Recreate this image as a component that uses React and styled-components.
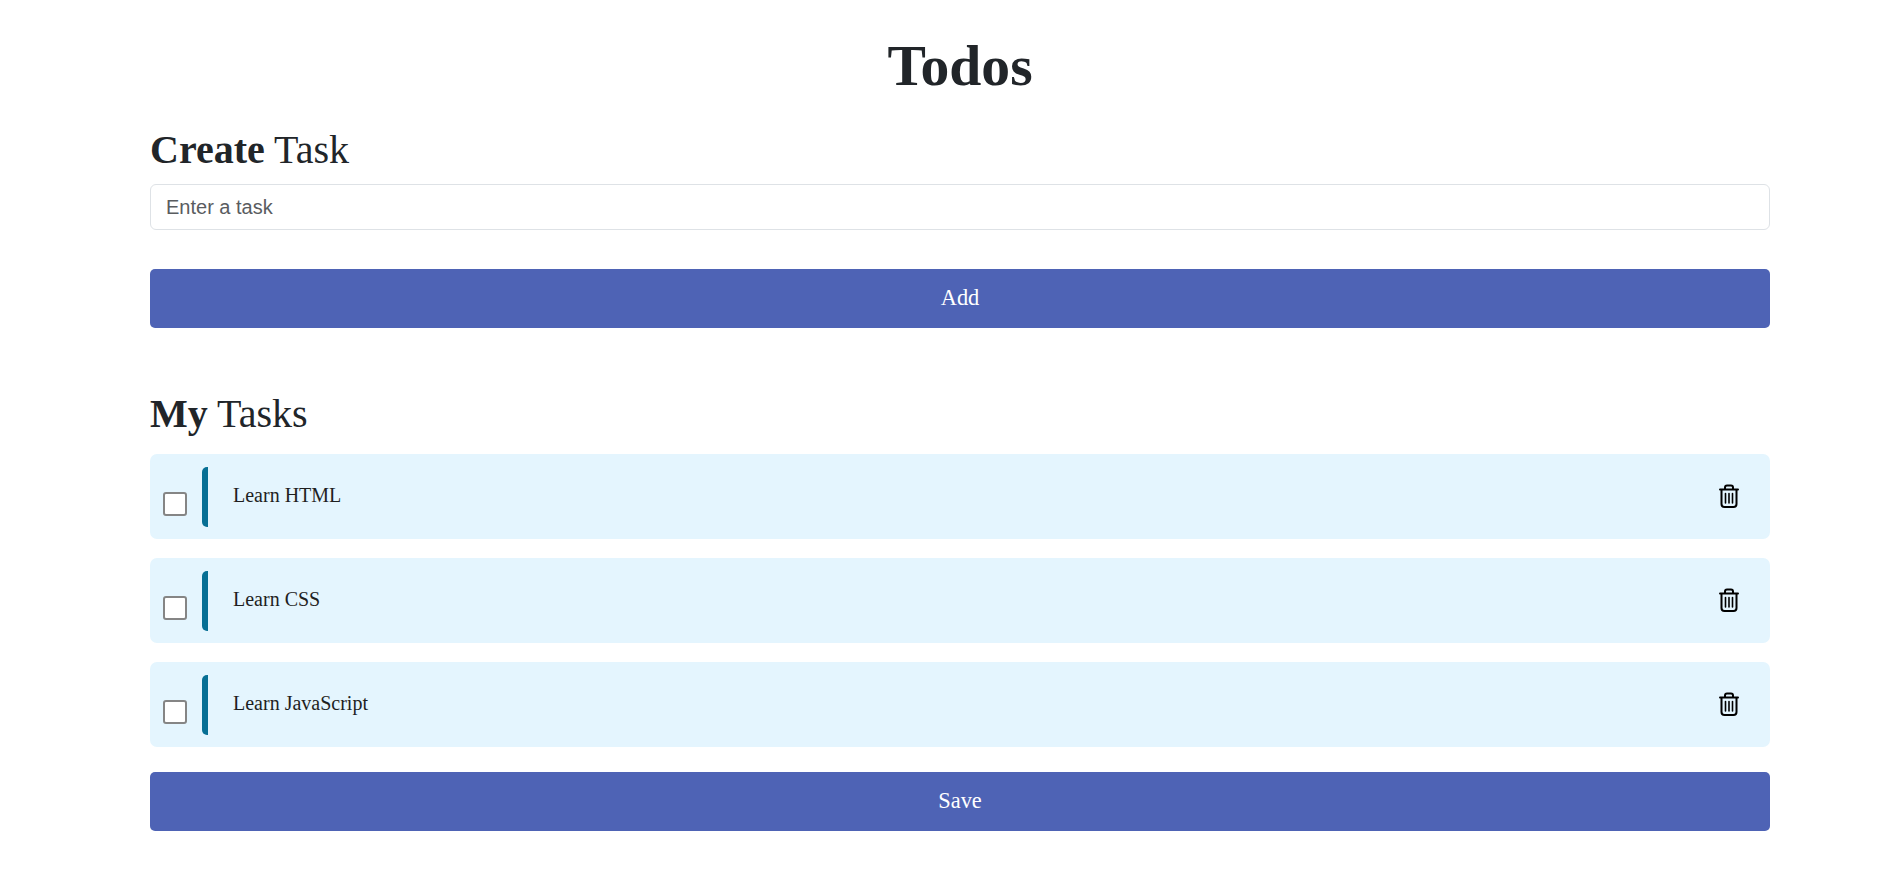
import React from "react";
import styled, { createGlobalStyle } from "styled-components";

const Global = createGlobalStyle`
  * { box-sizing: border-box; }
  html, body { margin: 0; padding: 0; background: #fff; }
  body { font-family: "Liberation Serif", "Times New Roman", serif; color: #212529; }
`;

const Page = styled.main`
  width: 1620px;
  margin: 0 0 0 150px;
  padding: 0 0 60px;
  display: flex;
  flex-direction: column;
`;

const Title = styled.h1`
  margin: 0;
  padding-top: 34px;
  height: 126px;
  line-height: 64px;
  font-size: 57.6px;
  font-weight: 700;
  text-align: center;
`;

const Heading = styled.h2`
  margin: 0;
  font-size: 40px;
  line-height: 48px;
  font-weight: 400;
  b { font-weight: 700; }
`;

const Input = styled.input`
  display: block;
  width: 100%;
  height: 46px;
  margin-top: 10px;
  padding: 0 15px;
  border: 1px solid #dee2e6;
  border-radius: 6px;
  font-family: "Liberation Sans", Arial, sans-serif;
  font-size: 20px;
  color: #212529;
  outline: none;
  &::placeholder { color: #595c5f; opacity: 1; }
`;

const Button = styled.button`
  display: block;
  width: 100%;
  height: 59px;
  margin-top: ${(p) => p.$top}px;
  padding: 0 0 2px;
  border: 0;
  border-radius: 5px;
  background: #4e63b5;
  color: #fff;
  font-family: "Liberation Serif", serif;
  font-size: 22.4px;
`;

const TasksHeading = styled(Heading)`
  margin-top: 62px;
`;

const List = styled.ul`
  list-style: none;
  margin: 16px 0 0;
  padding: 0;
  display: flex;
  flex-direction: column;
  gap: 19px;
`;

const Row = styled.li`
  height: 85px;
  display: flex;
  align-items: flex-start;
  padding: 13px 0 0 13px;
  background: #e4f5fe;
  border-radius: 7px;
`;

const Check = styled.input.attrs({ type: "checkbox" })`
  appearance: none;
  flex: none;
  width: 24px;
  height: 24px;
  margin: 25px 15px 0 0;
  background: #fff;
  border: 2px solid #858585;
  border-radius: 3px;
`;

const Accent = styled.span`
  flex: none;
  width: 6px;
  height: 60px;
  background: #076f94;
  border-radius: 5px 0 0 5px;
`;

const Label = styled.span`
  flex: 1;
  margin: 16px 0 0 25px;
  font-size: 20px;
  line-height: 24px;
  color: #1f1f1f;
`;

const Trash = styled.button`
  flex: none;
  margin: 17px 31px 0 0;
  padding: 0;
  border: 0;
  background: none;
  color: #000;
  display: flex;
`;

const TrashIcon = () => (
  <svg width="20" height="24" viewBox="0 0 20 24" fill="none" stroke="currentColor" strokeWidth="2" strokeLinecap="round">
    <path d="M1 5.5H19" />
    <path d="M6 5V3.5C6 2.4 6.9 1.5 8 1.5H12C13.1 1.5 14 2.4 14 3.5V5" />
    <path d="M2.5 6V20C2.5 21.7 3.8 23 5.5 23H14.5C16.2 23 17.5 21.7 17.5 20V6" />
    <path d="M6.5 9.5V19M10 9.5V19M13.5 9.5V19" strokeWidth="1.6" />
  </svg>
);

const tasks = ["Learn HTML", "Learn CSS", "Learn JavaScript"];

export default function App() {
  return (
    <Page>
      <Global />
      <Title>Todos</Title>
      <Heading><b>Create</b> Task</Heading>
      <Input placeholder="Enter a task" />
      <Button $top={39}>Add</Button>
      <TasksHeading><b>My</b> Tasks</TasksHeading>
      <List>
        {tasks.map((t) => (
          <Row key={t}>
            <Check />
            <Accent />
            <Label>{t}</Label>
            <Trash aria-label="Delete"><TrashIcon /></Trash>
          </Row>
        ))}
      </List>
      <Button $top={25}>Save</Button>
    </Page>
  );
}
